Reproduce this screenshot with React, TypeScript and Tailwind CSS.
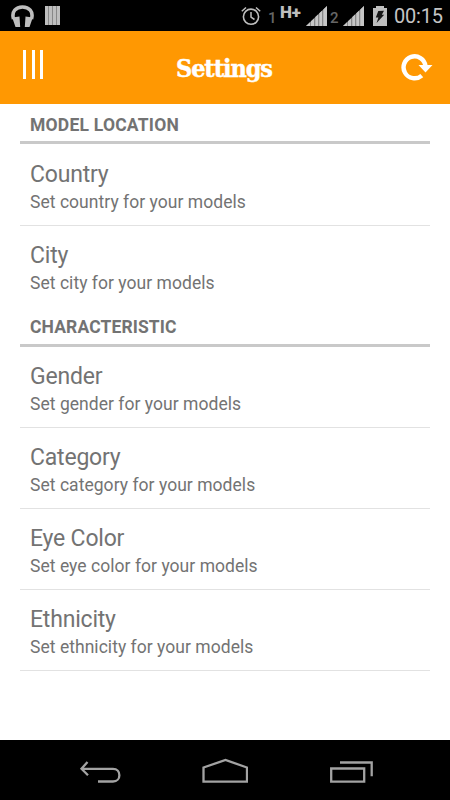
import React from 'react';

type Item = { title: string; detail: string; box: string };

const locationItems: Item[] = [
  { title: 'Country', detail: 'Set country for your models', box: 'h-[82px] pt-[16px] border-b' },
  { title: 'City', detail: 'Set city for your models', box: 'h-[81px] pt-[15px]' },
];

const characteristicItems: Item[] = [
  { title: 'Gender', detail: 'Set gender for your models', box: 'h-[81px] pt-[15px] border-b' },
  { title: 'Category', detail: 'Set category for your models', box: 'h-[81px] pt-[15px] border-b' },
  { title: 'Eye Color', detail: 'Set eye color for your models', box: 'h-[81px] pt-[15px] border-b' },
  { title: 'Ethnicity', detail: 'Set ethnicity for your models', box: 'h-[81px] pt-[15px] border-b' },
];

function Signal() {
  return (
    <svg width="21" height="20" viewBox="0 0 21 20" className="shrink-0">
      <path d="M0 20 21 0V20Z" fill="#888" />
      <path d="M0 20 4 16.2V20ZM5 15.2 8 12.4V20H5ZM9.3 11.1 12 8.6V20H9.3ZM13.3 7.3 16 4.8V20h-2.7ZM17.3 3.5 21 0V20h-3.7Z" fill="#c6c6c6" />
    </svg>
  );
}

function StatusBar() {
  return (
    <div className="flex h-[31px] shrink-0 bg-black text-[#bebebe]">
      <svg width="24" height="23" viewBox="0 0 24 23" className="ml-[11px] mt-[5px]">
        <path d="M2.500 14C.3 6.500 5 2 11.500 2S22.700 6.500 20.500 14" fill="none" stroke="#bebebe" strokeWidth="3.600" />
        <path d="M1.200 12.500 8.500 11.500 9.200 22H4.500ZM21.800 12.500 14.500 11.500 13.800 22h4.700Z" fill="#bebebe" />
      </svg>
      <div className="ml-[10px] mt-[6px] flex h-[19px] w-[15px] gap-px bg-[#888]">
        <i className="w-[3px] bg-[#bebebe]" /><i className="w-[3px] bg-[#bebebe]" /><i className="w-[3px] bg-[#bebebe]" /><i className="w-[3px] bg-[#bebebe]" />
      </div>
      <svg width="20" height="20" viewBox="0 0 20 20" className="ml-[181px] mt-[6px]" fill="none" stroke="#bebebe">
        <circle cx="10" cy="10.700" r="7.600" strokeWidth="1.600" />
        <path d="M10 6v5.200l3.500 2.300M.8 5.200 5 1.500M19.200 5.200 15 1.500" strokeWidth="1.500" />
      </svg>
      <span className="ml-[7px] mt-[8px] w-[9px] text-[15px] leading-5 font-medium text-[#666]">1</span>
      <span className="ml-[3px] mt-[3px] w-[22px] text-[17px] leading-[18px] font-black tracking-[-0.3px]">H+</span>
      <div className="ml-[4px] mt-[6px] flex"><Signal /></div>
      <span className="ml-[3px] mt-[8px] w-[9px] text-[15px] leading-5 font-medium text-[#666]">2</span>
      <div className="ml-[4px] mt-[6px] flex"><Signal /></div>
      <svg width="14" height="20" viewBox="0 0 14 20" className="ml-[9px] mt-[6px]">
        <path d="M3 0h8v2h3v18H0V2h3Z" fill="#bebebe" />
        <path d="m5.300 5 5.700-.2-2.200 4h2.400L3.600 17l1.800-5.500H2.800Z" fill="#171717" />
      </svg>
      <span className="ml-[7px] mt-[4px] text-[20px] leading-6 tracking-[-0.2px] text-[#c5c5c5]">00:15</span>
    </div>
  );
}

function Section({ name, items, heading }: { name: string; items: Item[]; heading: string }) {
  return (
    <section>
      <h2 className={`${heading} border-b-[3px] border-[#c9c9c9] pl-[10px] text-[17.5px] leading-[22px] font-bold text-[#737373]`}>{name}</h2>
      {items.map((item) => (
        <div key={item.title} className={`${item.box} border-[#e2e2e2] pl-[10px] text-[#737373]`}>
          <div className="text-[23px] leading-[30px] tracking-[-0.2px]">{item.title}</div>
          <div className="mt-[-1px] text-[17.5px] leading-[26px] tracking-[0.04px]">{item.detail}</div>
        </div>
      ))}
    </section>
  );
}

export default function App() {
  return (
    <div className="flex h-[800px] w-[450px] flex-col overflow-hidden bg-white font-['Roboto',sans-serif] whitespace-nowrap">
      <StatusBar />
      <header className="flex h-[73px] shrink-0 items-start bg-[#ff9802] text-white">
        <button className="ml-[23px] mt-[19px] flex h-[29px] w-[20px] justify-between" aria-label="Menu">
          <i className="h-[29px] w-[3px] bg-white" /><i className="h-[29px] w-[3px] bg-white" /><i className="h-[29px] w-[3px] bg-white" />
        </button>
        <h1 className="ml-[133px] mt-[22px] w-[100px] text-[25px] leading-8 font-bold tracking-[-1.1px] [-webkit-text-stroke:0.4px_white] font-['DejaVu_Serif_Condensed','DejaVu_Serif',serif]">Settings</h1>
        <svg width="32" height="28" viewBox="0 0 32 28" className="ml-[125px] mt-[22px]">
          <path d="M20.800 22.600A11 11 0 1 1 24.500 13" fill="none" stroke="white" strokeWidth="4.400" />
          <path d="M17.500 12H31.500L24.500 19.500Z" fill="white" />
        </svg>
      </header>
      <main className="flex-1 px-[20px]">
        <Section name="MODEL LOCATION" items={locationItems} heading="h-[40px] pt-[10px] tracking-[0.22px]" />
        <Section name="CHARACTERISTIC" items={characteristicItems} heading="h-[40px] pt-[9px] tracking-[0.12px]" />
      </main>
      <nav className="flex h-[60px] shrink-0 bg-black text-[#a3a3a3]">
        <svg width="43" height="26" viewBox="0 0 43 26" className="ml-[79px] mt-[19px]" fill="none" stroke="currentColor" strokeWidth="2.300">
          <path d="M8.500 3 2.500 9.800l6.500 6.500M2 9.800h32c8.500 0 8.500 12.700 0 12.700H19" />
        </svg>
        <svg width="47" height="26" viewBox="0 0 47 26" className="ml-[79px] mt-[18px]" fill="none" stroke="currentColor" strokeWidth="2.300">
          <path d="M2.500 9.500 24.500 2 46 9.500V23.700H2.500Z" />
        </svg>
        <svg width="44" height="24" viewBox="0 0 44 24" className="ml-[82px] mt-[20px]" fill="none" stroke="currentColor" strokeWidth="2.300">
          <path d="M1.200 8.500h33v13.200h-33ZM10 2.500h31.700v13.800" />
        </svg>
      </nav>
    </div>
  );
}
